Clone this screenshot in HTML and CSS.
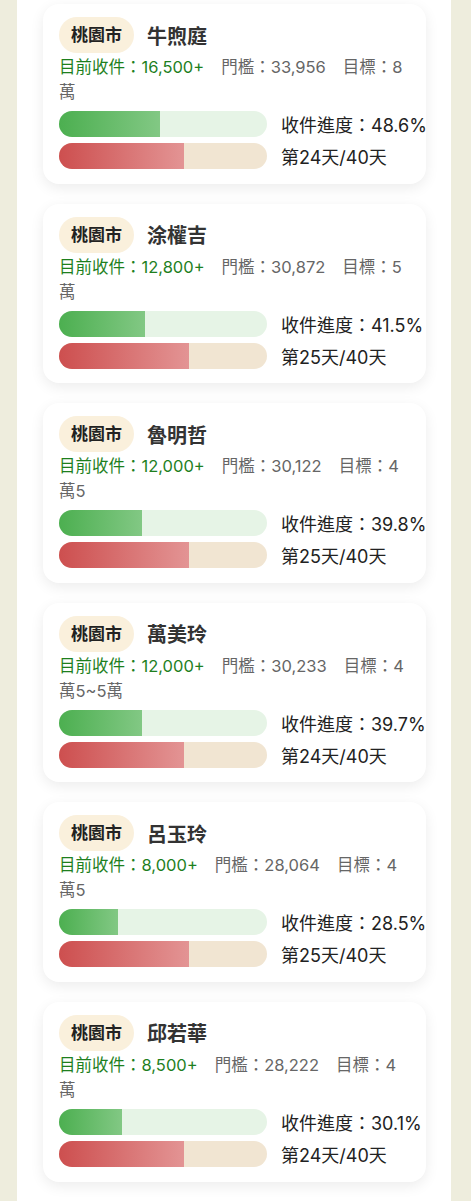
FILE: index.html
```html
<!DOCTYPE html>
<html lang="zh-Hant">
<head>
    <meta charset="UTF-8">
    <meta name="viewport" content="width=device-width, initial-scale=1.0">
    <title>收件進度</title>
    <link rel="stylesheet" href="styles.css">
</head>
<body>
    <div class="page">
        <div class="card">
            <div class="card-head">
                <span class="city">桃園市</span>
                <span class="name">牛煦庭</span>
            </div>
            <p class="info"><span class="count">目前收件：16,500+</span><span class="meta">門檻：33,956</span><span class="meta">目標：8萬</span></p>
            <div class="bars">
                <div class="track track-green"><div class="fill fill-green" style="width: 48.6%"></div></div>
                <span class="label">收件進度：48.6%</span>
                <div class="track track-red"><div class="fill fill-red" style="width: 60%"></div></div>
                <span class="label">第24天/40天</span>
            </div>
        </div>

        <div class="card">
            <div class="card-head">
                <span class="city">桃園市</span>
                <span class="name">涂權吉</span>
            </div>
            <p class="info"><span class="count">目前收件：12,800+</span><span class="meta">門檻：30,872</span><span class="meta">目標：5萬</span></p>
            <div class="bars">
                <div class="track track-green"><div class="fill fill-green" style="width: 41.5%"></div></div>
                <span class="label">收件進度：41.5%</span>
                <div class="track track-red"><div class="fill fill-red" style="width: 62.5%"></div></div>
                <span class="label">第25天/40天</span>
            </div>
        </div>

        <div class="card">
            <div class="card-head">
                <span class="city">桃園市</span>
                <span class="name">魯明哲</span>
            </div>
            <p class="info"><span class="count">目前收件：12,000+</span><span class="meta">門檻：30,122</span><span class="meta">目標：4萬5</span></p>
            <div class="bars">
                <div class="track track-green"><div class="fill fill-green" style="width: 39.8%"></div></div>
                <span class="label">收件進度：39.8%</span>
                <div class="track track-red"><div class="fill fill-red" style="width: 62.5%"></div></div>
                <span class="label">第25天/40天</span>
            </div>
        </div>

        <div class="card">
            <div class="card-head">
                <span class="city">桃園市</span>
                <span class="name">萬美玲</span>
            </div>
            <p class="info"><span class="count">目前收件：12,000+</span><span class="meta">門檻：30,233</span><span class="meta">目標：4萬5~5萬</span></p>
            <div class="bars">
                <div class="track track-green"><div class="fill fill-green" style="width: 39.7%"></div></div>
                <span class="label">收件進度：39.7%</span>
                <div class="track track-red"><div class="fill fill-red" style="width: 60%"></div></div>
                <span class="label">第24天/40天</span>
            </div>
        </div>

        <div class="card">
            <div class="card-head">
                <span class="city">桃園市</span>
                <span class="name">呂玉玲</span>
            </div>
            <p class="info"><span class="count">目前收件：8,000+</span><span class="meta">門檻：28,064</span><span class="meta">目標：4萬5</span></p>
            <div class="bars">
                <div class="track track-green"><div class="fill fill-green" style="width: 28.5%"></div></div>
                <span class="label">收件進度：28.5%</span>
                <div class="track track-red"><div class="fill fill-red" style="width: 62.5%"></div></div>
                <span class="label">第25天/40天</span>
            </div>
        </div>

        <div class="card">
            <div class="card-head">
                <span class="city">桃園市</span>
                <span class="name">邱若華</span>
            </div>
            <p class="info"><span class="count">目前收件：8,500+</span><span class="meta">門檻：28,222</span><span class="meta">目標：4萬</span></p>
            <div class="bars">
                <div class="track track-green"><div class="fill fill-green" style="width: 30.1%"></div></div>
                <span class="label">收件進度：30.1%</span>
                <div class="track track-red"><div class="fill fill-red" style="width: 60%"></div></div>
                <span class="label">第24天/40天</span>
            </div>
        </div>
    </div>
</body>
</html>
```

FILE: styles.css
```css
/* colors */
:root {
    --bg: #eeeddd;
    --page: #ffffff;
    --text: #222;
    --muted: #666;
    --green-text: #1e7f1e;
    --city-bg: #faf0dc;
    --green-track: #e6f4e6;
    --red-track: #f1e5d2;
}

body {
    margin: 0;
    background-color: var(--bg);
    font-family: Inter, "Noto Sans CJK TC", sans-serif;
    color: var(--text);
}

.page {
    width: 434px;
    margin-left: 17px;
    min-height: 1201px;
    background-color: var(--page);
    padding: 4px 0 20px;
    box-sizing: border-box;
}

.card {
    width: 383px;
    margin: 0 0 20px 26px;
    padding: 13px 20px 14.6px 16px;
    box-sizing: border-box;
    background-color: #fff;
    border-radius: 16px;
    box-shadow: 0 4px 14px rgba(0, 0, 0, 0.08);
}

.card-head {
    display: flex;
    align-items: center;
    gap: 13px;
    height: 36px;
}

.city {
    background-color: var(--city-bg);
    border-radius: 18px;
    padding: 0 12px;
    height: 36px;
    line-height: 36px;
    font-size: 17px;
    font-weight: bold;
    color: #222;
}

.name {
    font-size: 20px;
    font-weight: bold;
    color: #333;
}

.info {
    margin: 2px 0 0;
    height: 50px;
    font-size: 16.5px;
    line-height: 25px;
    color: var(--muted);
}

.count {
    color: var(--green-text);
    margin-right: 17px;
}

.meta {
    margin-right: 17px;
}

.meta:last-child {
    margin-right: 0;
}

.bars {
    display: grid;
    grid-template-columns: 208px auto;
    column-gap: 14px;
    row-gap: 6px;
    align-items: center;
    margin-top: 6px;
    margin-right: -20px;
}

.track {
    height: 26px;
    border-radius: 13px;
    overflow: hidden;
}

.track-green {
    background-color: var(--green-track);
}

.track-red {
    background-color: var(--red-track);
}

.fill {
    height: 100%;
}

.fill-green {
    background: linear-gradient(to right, #4caf50, #82c884);
}

.fill-red {
    background: linear-gradient(to right, #cd4f4f, #e39494);
}

.label {
    font-size: 18px;
    color: #222;
    white-space: nowrap;
}
```
